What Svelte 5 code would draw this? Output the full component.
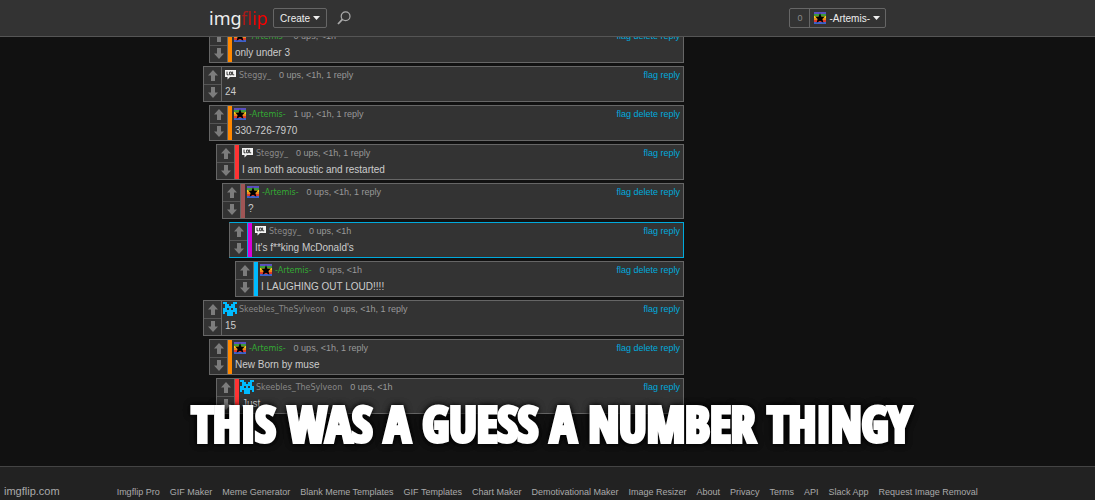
<script lang="ts">
  type Avatar = "star" | "lol" | "invader";

  type Comment = {
    user: string;
    avatar: Avatar;
    own?: boolean;
    depth: number;
    meta: string;
    text: string;
    selected?: boolean;
  };

  const STEP = 6.5;

  const comments: Comment[] = [
    { user: "-Artemis-", avatar: "star", own: true, depth: 1, meta: "0 ups, <1h", text: "only under 3" },
    { user: "Steggy_", avatar: "lol", depth: 0, meta: "0 ups, <1h, 1 reply", text: "24" },
    { user: "-Artemis-", avatar: "star", own: true, depth: 1, meta: "1 up, <1h, 1 reply", text: "330-726-7970" },
    { user: "Steggy_", avatar: "lol", depth: 2, meta: "0 ups, <1h, 1 reply", text: "I am both acoustic and restarted" },
    { user: "-Artemis-", avatar: "star", own: true, depth: 3, meta: "0 ups, <1h, 1 reply", text: "?" },
    { user: "Steggy_", avatar: "lol", depth: 4, meta: "0 ups, <1h", text: "It's f**king McDonald's", selected: true },
    { user: "-Artemis-", avatar: "star", own: true, depth: 5, meta: "0 ups, <1h", text: "I LAUGHING OUT LOUD!!!!" },
    { user: "Skeebles_TheSylveon", avatar: "invader", depth: 0, meta: "0 ups, <1h, 1 reply", text: "15" },
    { user: "-Artemis-", avatar: "star", own: true, depth: 1, meta: "0 ups, <1h, 1 reply", text: "New Born by muse" },
    { user: "Skeebles_TheSylveon", avatar: "invader", depth: 2, meta: "0 ups, <1h", text: "Just" },
  ];

  const footerLinks = [
    "Imgflip Pro",
    "GIF Maker",
    "Meme Generator",
    "Blank Meme Templates",
    "GIF Templates",
    "Chart Maker",
    "Demotivational Maker",
    "Image Resizer",
    "About",
    "Privacy",
    "Terms",
    "API",
    "Slack App",
    "Request Image Removal",
  ];
</script>

{#snippet star()}
  <svg class="star" viewBox="0 0 12 12" aria-hidden="true">
    <rect width="12" height="12" fill="#5a4fc0" />
    <rect y="2" width="12" height="2" fill="#3c9a3c" />
    <rect y="4" width="12" height="2" fill="#f0d020" />
    <rect y="6" width="12" height="2" fill="#f08a1c" />
    <rect y="8" width="12" height="2" fill="#e03a2c" />
    <rect y="10" width="12" height="2" fill="#4060c8" />
    <path d="M6 1.2 7.4 4.4 11 4.6 8.4 7 9.4 10.8 6 8.8 2.6 10.8 3.6 7 1 4.6 4.6 4.4Z" fill="#000" />
  </svg>
{/snippet}

{#snippet lol()}
  <svg class="lol" viewBox="0 0 11 10" aria-hidden="true">
    <path d="M0 0H11V7H5L2.5 9.5V7H0Z" fill="#f4f4f4" />
    <path d="M2 1.6V4.8H3.6M4.6 2H6.4V4.8H4.6ZM7.6 1.6V4.8H9.2" fill="none" stroke="#222" stroke-width="0.9" />
  </svg>
{/snippet}

{#snippet invader()}
  <svg class="invader" viewBox="0 0 7 7" fill="#0bf" aria-hidden="true">
    <path d="M0 0H2V1H3V2H4V1H5V0H7V1H6V3H7V5H6V6H5V7H2V6H1V5H0V3H1V1H0Z" />
    <path d="M2 3H3V4H2ZM4 3H5V4H4ZM1 5H2V6H1ZM5 5H6V6H5Z" fill="#333" />
    <path d="M0 5H1V6H0ZM6 5H7V6H6Z" />
  </svg>
{/snippet}

{#snippet arrow(down: boolean)}
  <svg class="arrow" viewBox="0 0 10 11" aria-hidden="true">
    <path
      d={down ? "M3 0H7V5.5H10L5 11 0 5.5H3Z" : "M3 11H7V5.5H10L5 0 0 5.5H3Z"}
      fill="#7c7c7c"
    />
  </svg>
{/snippet}

{#snippet caret()}
  <svg class="caret" viewBox="0 0 7 4" aria-hidden="true">
    <path d="M0 0H7L3.5 4Z" fill="#eee" />
  </svg>
{/snippet}

<div class="page">
  <header>
    <div class="wrap bar">
      <a class="logo" href="/">img<span>flip</span></a>
      <button class="create" type="button">Create {@render caret()}</button>
      <button class="search" type="button" aria-label="Search">
        <svg viewBox="0 0 14 14" aria-hidden="true">
          <circle cx="8.6" cy="5.2" r="4.4" fill="none" stroke="#aaa" stroke-width="1.2" />
          <path d="M5.4 8.4 1 13" stroke="#aaa" stroke-width="1.8" />
        </svg>
      </button>
      <div class="account">
        <a class="count" href="/notifications">0</a>
        <button type="button">{@render star()} -Artemis- {@render caret()}</button>
      </div>
    </div>
  </header>

  <main>
    <div class="wrap">
      <ul class="thread">
        {#each comments as c}
          <li
            class="comment"
            class:selected={c.selected}
            style="margin-left: {Math.floor(c.depth * STEP)}px"
          >
            <div class="votes">
              <button type="button" aria-label="Upvote">{@render arrow(false)}</button>
              <button type="button" aria-label="Downvote">{@render arrow(true)}</button>
            </div>
            <div class="content depth-{c.depth}">
              <div class="info">
                <span class="avatar">
                  {#if c.avatar === "star"}
                    {@render star()}
                  {:else if c.avatar === "lol"}
                    {@render lol()}
                  {:else}
                    {@render invader()}
                  {/if}
                </span>
                <a class="user" class:own={c.own} href="/user/{c.user}">{c.user}</a>
                <span class="meta">{c.meta}</span>
                <span class="actions">
                  <a href="#flag">flag</a>
                  {#if c.own}<a href="#delete">delete</a>{/if}
                  <a href="#reply">reply</a>
                </span>
              </div>
              <p>{c.text}</p>
            </div>
          </li>
        {/each}
      </ul>
    </div>
    <div class="caption">THIS WAS A GUESS A NUMBER THINGY</div>
  </main>

  <footer>
    <span class="mark">imgflip.com</span>
    <nav>
      {#each footerLinks as link}
        <a href="/{link.toLowerCase().replaceAll(' ', '-')}">{link}</a>
      {/each}
    </nav>
  </footer>
</div>

<style>
  :global(body) {
    background: #111;
  }

  .page {
    color: #ccc;
    display: flex;
    flex-direction: column;
    font-family: "Liberation Sans", Arial, sans-serif;
    font-size: 10px;
    min-height: 100vh;
  }

  a {
    color: inherit;
    text-decoration: none;
  }

  button {
    background: none;
    border: 0;
    color: inherit;
    cursor: pointer;
    font: inherit;
    padding: 0;
  }

  svg {
    display: block;
    flex: none;
  }

  .wrap {
    margin: 0 auto;
    max-width: 689px;
  }

  header {
    background: #333;
    border-bottom: 1px solid #555;
    position: relative;
    z-index: 1;
  }

  .bar {
    align-items: center;
    box-sizing: border-box;
    display: flex;
    height: 36px;
    padding: 0 6px;
  }

  .logo {
    color: #eee;
    font-family: "Noto Sans", "Open Sans", sans-serif;
    font-size: 18px;
    line-height: 34px;
    margin-right: 5px;
  }

  .logo span {
    background: linear-gradient(110deg, #a81c1c 20%, #f00 60%);
    background-clip: text;
    color: transparent;
  }

  .create,
  .account {
    border: 1px solid #666;
    border-radius: 2px;
    box-sizing: border-box;
    color: #eee;
    display: flex;
    height: 20px;
  }

  .create {
    align-items: center;
    gap: 3px;
    padding: 0 6px;
  }

  .caret {
    height: 4px;
    width: 7px;
  }

  .search {
    margin-left: 10px;
  }

  .search svg {
    height: 14px;
    width: 14px;
  }

  .account {
    margin-left: auto;
  }

  .count {
    border-right: 1px solid #666;
    color: #888;
    font-size: 9px;
    line-height: 18px;
    padding: 0 7px;
  }

  .account button {
    align-items: center;
    display: flex;
    gap: 3px;
    padding: 0 5px 0 4px;
  }

  main {
    flex: 1;
    position: relative;
  }

  .thread {
    list-style: none;
    margin: -10px 0 0;
    max-width: 481px;
    padding: 0;
  }

  .comment {
    background: #333;
    border: 1px solid #666;
    box-sizing: border-box;
    display: flex;
    margin-bottom: 3px;
  }

  .votes {
    border-right: 1px solid #666;
    display: flex;
    flex-direction: column;
    flex: none;
    width: 17px;
  }

  .votes button {
    align-items: center;
    display: flex;
    flex: 1;
    justify-content: center;
  }

  .votes button + button {
    border-top: 1px solid #555;
  }

  .arrow {
    height: 11px;
    width: 10px;
  }

  .content {
    border-left: 4px solid transparent;
    flex: 1;
    min-width: 0;
    padding: 0 3px;
  }

  .depth-0 {
    border-left: 0;
  }

  .depth-1 {
    border-color: #f80;
  }

  .depth-2 {
    border-color: #f33;
  }

  .depth-3 {
    border-color: #a05555;
  }

  .depth-4 {
    border-color: #d800d8;
  }

  .depth-5 {
    border-color: #0bf;
  }

  .selected {
    border-color: #0ad #0ad #0ad #666;
  }

  .selected .votes {
    border-color: #0ad;
  }

  .info {
    align-items: center;
    display: flex;
    height: 16px;
  }

  .avatar {
    align-items: center;
    display: flex;
    justify-content: center;
    margin-left: -2px;
    width: 14px;
  }

  .star {
    height: 12px;
    width: 12px;
  }

  .lol {
    height: 10px;
    width: 11px;
  }

  .invader {
    height: 14px;
    width: 14px;
  }

  .user {
    color: #888;
    font-family: "DejaVu Sans", Verdana, sans-serif;
    font-size: 8px;
    margin: 0 8px 0 2px;
  }

  .own {
    color: #3a3;
  }

  .meta {
    color: #999;
    font-size: 9px;
  }

  .actions {
    color: #0ad;
    font-size: 9px;
    margin-left: auto;
  }

  p {
    line-height: 18px;
    margin: 0;
  }

  .caption {
    -webkit-text-stroke: 4px #fff;
    bottom: 13px;
    color: #fff;
    font-family: Impact, "Open Sans Condensed", "DejaVu Sans Condensed", sans-serif;
    font-size: 49px;
    font-weight: bold;
    left: 8px;
    line-height: 60px;
    position: absolute;
    right: 0;
    text-align: center;
    text-shadow: 0 0 4px #000, 0 0 4px #000, 0 0 8px #000, 0 0 8px #000;
    white-space: nowrap;
    z-index: 1;
  }

  footer {
    align-items: center;
    background: #222;
    border-top: 1px solid #444;
    color: #aaa;
    display: flex;
    font-size: 9px;
    gap: 57px;
    padding: 17px 4px 1px;
  }

  .mark {
    font-size: 11px;
    line-height: 15px;
  }

  nav {
    display: flex;
    gap: 10px;
    white-space: nowrap;
  }
</style>
